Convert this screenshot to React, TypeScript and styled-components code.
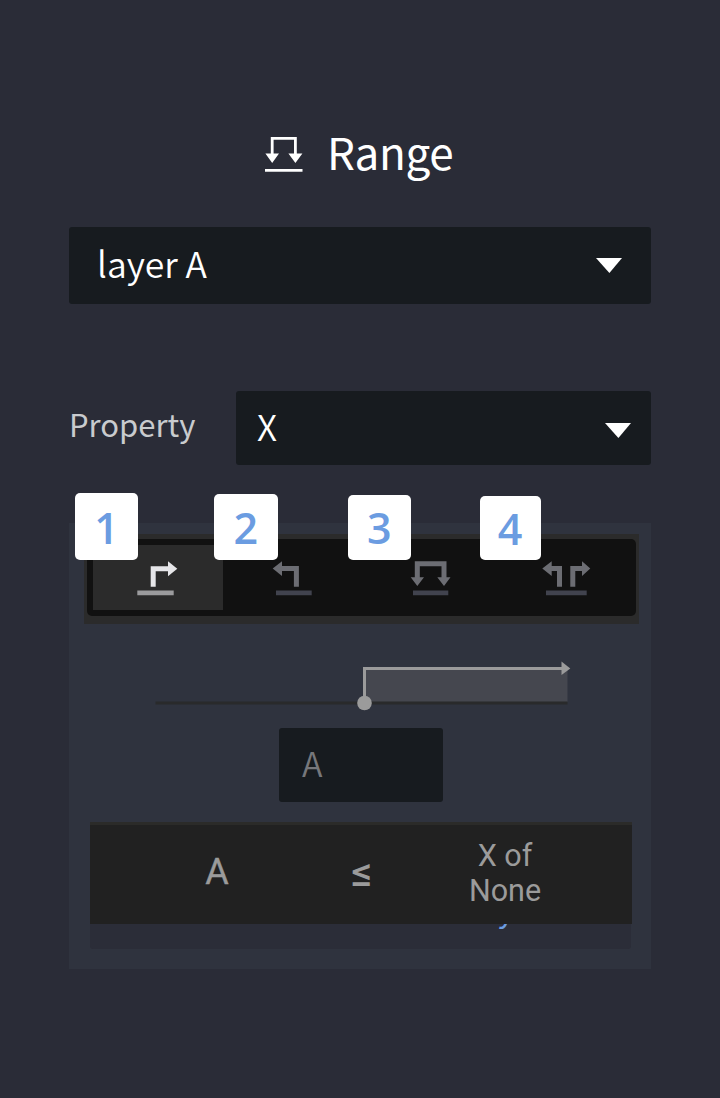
import styled, { createGlobalStyle } from "styled-components";

type RangeMode = "from" | "until" | "inside" | "outside";

const MODES: RangeMode[] = ["from", "until", "inside", "outside"];

export default function App() {
  return (
    <Page>
      <GlobalStyle />
      <Heading>
        <RangeLogo />
        <Title>Range</Title>
      </Heading>

      <LayerSelect>
        <SelectValue>layer A</SelectValue>
        <Caret />
      </LayerSelect>

      <PropertyRow>
        <PropertyLabel>Property</PropertyLabel>
        <PropertySelect>
          <SelectValue>X</SelectValue>
          <Caret />
        </PropertySelect>
      </PropertyRow>

      <Panel>
        <ToolbarFrame>
          <Toolbar>
            {MODES.map((mode) => (
              <ModeButton key={mode} $active={mode === "from"}>
                <ModeIcon mode={mode} />
              </ModeButton>
            ))}
          </Toolbar>
          <Badge $left={-9} $top={-41} $width={63} $height={67}>1</Badge>
          <Badge $left={130} $top={-40.5} $width={63.5} $height={66.5}>2</Badge>
          <Badge $left={264} $top={-39.5} $width={62.5} $height={65.5}>3</Badge>
          <Badge $left={395.5} $top={-38} $width={61} $height={64}>4</Badge>
        </ToolbarFrame>

        <RangeTrack />

        <ValueInput>A</ValueInput>

        <Condition>
          <Operand>A</Operand>
          <Operator>≤</Operator>
          <Target>
            X of
            <br />
            None
          </Target>
        </Condition>
        <ConditionFooter>
          <LayerName>y</LayerName>
        </ConditionFooter>
      </Panel>
    </Page>
  );
}

function RangeLogo() {
  return (
    <svg width="38" height="36" viewBox="0 0 38 36" fill="none">
      <path d="M7.2 18V2.3H30.4V18" stroke="#fff" strokeWidth="2.8" />
      <path d="M0.4 17.6H14L7.2 27ZM23.4 17.6H37.4L30.4 27Z" fill="#fff" />
      <path d="M0 34.3H37.5" stroke="#fff" strokeWidth="2.8" />
    </svg>
  );
}

function Caret() {
  return (
    <svg width="26" height="15" viewBox="0 0 26 15">
      <path d="M0 0H26L13.4 15Z" fill="#fff" />
    </svg>
  );
}

const ICONS = {
  from: {
    line: "M19.2 27.7V9.8H35",
    heads: "M34 2.3L43.3 9.8L34 17.3Z",
    base: "M3.3 33.9H39.7",
  },
  until: {
    line: "M28.4 27.7V9.6H13",
    heads: "M14 2.3L4.7 9.6L14 17Z",
    base: "M8 33.9H43.7",
  },
  inside: {
    line: "M11.3 19V4.7H38V19",
    heads: "M4.7 18.3H18L11.3 27ZM31.3 18.3H44.5L38 27Z",
    base: "M7 33.9H42.3",
  },
  outside: {
    line: "M16.5 27.7V9.6H8M29.8 27.7V9.6H40",
    heads: "M8.7 2.3L-0.7 9.6L8.7 17ZM39 2.3L47.3 9.6L39 17Z",
    base: "M3 33.9H43.7",
  },
};

function ModeIcon({ mode }: { mode: RangeMode }) {
  const icon = ICONS[mode];
  const active = mode === "from";
  const color = active ? "#e6e6e9" : "#6c6d73";
  return (
    <svg width="48" height="37" viewBox="0 0 48 37" fill="none" overflow="visible">
      <path d={icon.line} stroke={color} strokeWidth="5" />
      <path d={icon.heads} fill={color} />
      <path d={icon.base} stroke={active ? "#9b9b9d" : "#41434e"} strokeWidth="4.6" />
    </svg>
  );
}

function RangeTrack() {
  return (
    <Track width="416" height="52" viewBox="0 0 416 52" fill="none">
      <path d="M211 11H412.5V43H211Z" fill="#45474f" />
      <path d="M0.5 44H412.5" stroke="#292a2b" strokeWidth="3" />
      <path d="M209.5 44V9.5H408" stroke="#9b9b9b" strokeWidth="3" />
      <path d="M406.5 2.6L415.3 9.5L406.5 16Z" fill="#9b9b9b" />
      <circle cx="209.5" cy="44" r="7.3" fill="#9b9b9b" />
    </Track>
  );
}

const GlobalStyle = createGlobalStyle`
  body {
    margin: 0;
    background-color: #2a2c37;
  }

  * {
    box-sizing: border-box;
  }

  svg {
    display: block;
    flex-shrink: 0;
  }
`;

const Page = styled.main`
  width: 720px;
  height: 1098px;
  padding: 122px 69px 0;
  background-color: #2a2c37;
  color: white;
  font-family: "Noto Sans CJK JP", "Noto Sans", sans-serif;
`;

const Heading = styled.header`
  display: flex;
  align-items: center;
  height: 64px;
  padding-left: 196px;
  gap: 24px;
`;

const Title = styled.h1`
  margin: 0;
  padding-bottom: 6px;
  font-size: 44px;
  font-weight: 400;
  letter-spacing: -0.3px;
  line-height: 58px;
`;

const Select = styled.div`
  display: flex;
  align-items: center;
  justify-content: space-between;
  background-color: #171b1f;
  border-radius: 3px;
`;

const LayerSelect = styled(Select)`
  height: 77.5px;
  margin-top: 40.5px;
  padding: 0 29px 0 28px;
`;

const SelectValue = styled.span`
  padding-bottom: 5px;
  font-size: 35.5px;
  font-weight: 350;
  line-height: 69px;
`;

const PropertyRow = styled.div`
  display: flex;
  align-items: center;
  justify-content: space-between;
  margin-top: 86.5px;
`;

const PropertyLabel = styled.label`
  padding: 0 0 7px;
  color: #c9cbce;
  font-size: 31px;
  line-height: 66px;
`;

const PropertySelect = styled(Select)`
  width: 415px;
  height: 74.5px;
  padding: 0 20px 0 21px;

  svg {
    margin-top: 6px;
  }
`;

const Panel = styled.section`
  display: flex;
  flex-direction: column;
  height: 446px;
  margin-top: 58px;
  padding: 11px 15px 0;
  background-color: #2f333e;
`;

const ToolbarFrame = styled.div`
  position: relative;
  width: 555px;
  height: 90px;
  padding: 5px 3px 8px;
  background-color: #2b2b2b;
`;

const Toolbar = styled.div`
  display: grid;
  grid-template-columns: 130px 138px 138px 136px;
  height: 77px;
  padding: 6px 1px 6px 6px;
  background-color: #111;
  border-radius: 5px;
`;

const ModeButton = styled.div<{ $active: boolean }>`
  display: flex;
  align-items: center;
  justify-content: center;
  background-color: ${({ $active }) => ($active ? "#2b2b2b" : "transparent")};
`;

// numbered markers sit on top of the toolbar
const Badge = styled.span<{
  $left: number;
  $top: number;
  $width: number;
  $height: number;
}>`
  position: absolute;
  left: ${({ $left }) => $left}px;
  top: ${({ $top }) => $top}px;
  width: ${({ $width }) => $width}px;
  height: ${({ $height }) => $height}px;
  display: flex;
  align-items: center;
  justify-content: center;
  padding-top: 1px;
  background-color: white;
  border-radius: 5px;
  color: #6b9ce1;
  font-family: "Open Sans", "Noto Sans", sans-serif;
  font-size: 43px;
  font-weight: 600;
  line-height: 1;
`;

const Track = styled.svg`
  margin: 35px 0 0 71px;
`;

const ValueInput = styled.div`
  width: 164px;
  height: 74.5px;
  margin: 16.5px 0 0 195px;
  padding-left: 23px;
  background-color: #171b1f;
  border-radius: 3px;
  color: #76777b;
  font-size: 34px;
  font-weight: 350;
  line-height: 69px;
`;

const Condition = styled.div`
  display: flex;
  align-items: center;
  width: 542px;
  height: 102px;
  margin: 20px 0 0 6px;
  background-color: #212121;
  border-top: 3px solid #2b2b29;
  color: #9b9b9b;
  font-family: Roboto, sans-serif;
`;

const Operand = styled.span`
  width: 254px;
  padding-bottom: 6px;
  font-size: 36px;
  -webkit-text-stroke: 0.4px;
  text-align: center;
`;

const Operator = styled.span`
  width: 36px;
  padding-bottom: 6px;
  font-size: 41px;
  font-weight: 500;
  text-align: center;
`;

const Target = styled.span`
  width: 250px;
  padding-bottom: 3px;
  font-size: 30.5px;
  line-height: 35px;
  text-align: center;
`;

const ConditionFooter = styled.div`
  width: 541px;
  height: 25px;
  margin-left: 6px;
  overflow: hidden;
  background-color: #2b2d38;
  border-radius: 0 0 3px 3px;
`;

const LayerName = styled.span`
  display: block;
  margin: -17.5px 0 0 408px;
  color: #6b9ce1;
  font-size: 30px;
  line-height: 4px;
`;
